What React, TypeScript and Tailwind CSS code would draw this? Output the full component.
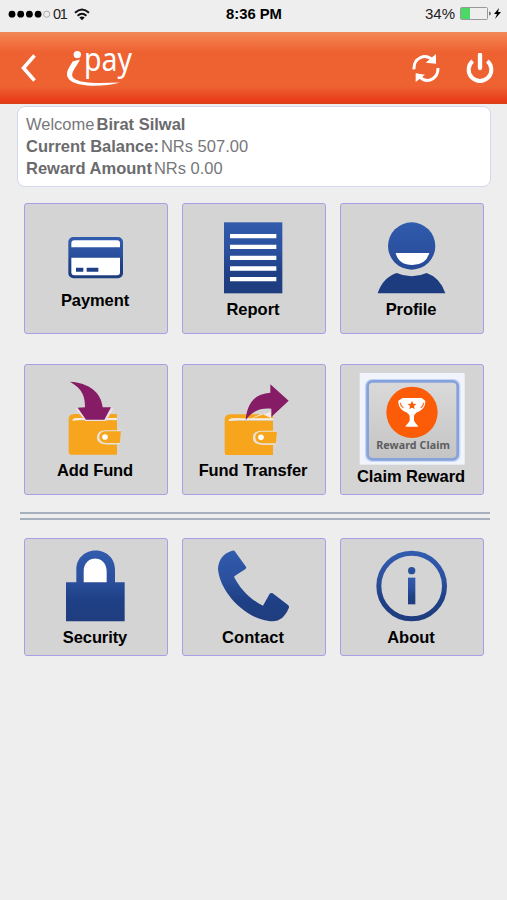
import type { ReactNode } from 'react';

const BLUE = 'url(#blue)';
const ORANGE = '#f6a51c';
const PURPLE = '#861c66';

type Tile = {
  label: string;
  labelClass: string;
  viewBox: string;
  height: number;
  icon: ReactNode;
};

const wallet = (
  <>
    <path d="M161 192q0-14 16-15h129v13h-122q-10 2-10 6h132v34h-40q-20 0-20 17t20 17q2 6 40 4v31H168q-7 0-7-7z" fill={ORANGE} />
    <path d="M172 197q1-7 13-8h121v5H200z" fill="#f6efe0" />
    <path d="M318 226h-48q-24 1-24 21t24 21h44" fill="#e9e2d6" />
    <path d="M318 229h-44q-21 0-21 17t21 18h40q2-4 2-17z" fill={ORANGE} />
    <circle cx="270" cy="246" r="8.5" fill="#fff" />
  </>
);

const mainTiles: Tile[] = [
  {
    label: 'Payment',
    labelClass: 'tracking-[-0.1px]',
    viewBox: '30 27 426 258',
    height: 86,
    icon: (
      <>
        <rect x="160" y="126" width="164" height="124" rx="15" fill={BLUE} />
        <path d="M169 157v-12q0-9 9-9h128q9 0 9 9v12z" fill="#fff" />
        <path d="M169 188h146v44q0 9-9 9H178q-9 0-9-9z" fill="#fff" />
        <path d="M183 218h22v12h-22zM215 218h35v12h-35z" fill="#1f3f86" />
      </>
    ),
  },
  {
    label: 'Report',
    labelClass: 'tracking-normal',
    viewBox: '24 27 426 285',
    height: 95,
    icon: (
      <>
        <rect x="147" y="82" width="175" height="213" fill={BLUE} />
        <path d="M165 117h139v13H165zM165 149h139v13H165zM165 182h139v13H165zM165 214h139v13H165zM165 246h139v13H165z" fill="#fff" />
      </>
    ),
  },
  {
    label: 'Profile',
    labelClass: 'tracking-[-0.1px]',
    viewBox: '18 27 426 285',
    height: 95,
    icon: (
      <>
        <circle cx="230" cy="153" r="71" fill="url(#head)" />
        <path d="M182 174h101q-10 36-51 36t-50-36z" fill="#fff" />
        <path d="M128 295q16-48 57-61 45 20 90 0 41 14 56 61z" fill="#1d3c80" />
      </>
    ),
  },
  {
    label: 'Add Fund',
    labelClass: 'tracking-[-0.1px]',
    viewBox: '30 30 426 285',
    height: 95,
    icon: (
      <>
        {wallet}
        <path d="M181 161l30 37h62l24-40z" fill="#eadfe2" />
        <path d="M165 80c56 4 93 30 98 77h25l-20 37h-55l-25-36 22-1c0-30-5-54-45-77z" fill={PURPLE} />
      </>
    ),
  },
  {
    label: 'Fund Transfer',
    labelClass: 'tracking-[-0.1px]',
    viewBox: '24 30 426 285',
    height: 95,
    icon: (
      <>
        <g transform="translate(-12 1)">{wallet}</g>
        <path d="M210 198l50-22 28 14 4-22z" fill="#f1e7e5" />
        <path d="M212 196c4-48 24-80 74-83V88l55 49-52 49v-25c-31-3-58 6-77 35z" fill={PURPLE} />
      </>
    ),
  },
  {
    label: 'Claim Reward',
    labelClass: 'tracking-[-0.1px]',
    viewBox: '18 30 426 303',
    height: 101,
    icon: (
      <>
        <rect x="74" y="54" width="315" height="275" fill="#f1f4fb" />
        <rect x="90" y="72" width="286" height="248" rx="20" fill="#c1d3f4" />
        <rect x="98" y="79" width="270" height="234" rx="15" fill="url(#silver)" stroke="#87a2da" strokeWidth="8" />
        <circle cx="231" cy="172" r="77" fill="#fc5b08" />
        <path d="M203 129h57l11 8c1 22-14 31-25 35-7 5-9 8-9 13v9c0 8 9 12 13 21h-39c4-9 13-13 13-21v-9c0-5-3-8-10-13-12-5-25-15-24-35z" fill="#fff" />
        <path d="M196 143q0 9 9 16M266 143q0 9-9 16" stroke="#fc7b38" strokeWidth="4" fill="none" />
        <path d="M231 138l4 8 9 1-7 6 2 9-8-4-8 4 2-9-7-6 9-1z" fill="#fc5b08" />
        <text x="234" y="283" textAnchor="middle" textLength="221" fontFamily="Noto Sans, sans-serif" fontSize="32" fontWeight="700" fill="#5c5c5e">
          Reward Claim
        </text>
      </>
    ),
  },
];

const infoTiles: Tile[] = [
  {
    label: 'Security',
    labelClass: 'tracking-[-0.1px]',
    viewBox: '30 27 426 264',
    height: 88,
    icon: (
      <>
        <path d="M205 160v-35c0-53 71-53 71 0v35z" fill="#fff" />
        <path d="M153 157h31v-37c0-78 116-78 116 0v37h29v117H153zM206 157h69v-33c0-51-69-51-69 0z" fill={BLUE} />
      </>
    ),
  },
  {
    label: 'Contact',
    labelClass: 'tracking-[0.1px]',
    viewBox: '24 27 426 264',
    height: 88,
    icon: (
      <path d="M169 63q8-4 12 3l33 46q-1 6-7 8-20 12-30 20c16 33 50 70 87 87l20-36q4-4 9-1l46 35q5 4 2 10c-12 29-31 43-60 38-83-12-150-98-152-158 3-29 16-43 40-52z" fill={BLUE} />
    ),
  },
  {
    label: 'About',
    labelClass: 'tracking-normal',
    viewBox: '18 27 426 264',
    height: 88,
    icon: (
      <>
        <circle cx="230" cy="168" r="98.500" fill="none" stroke={BLUE} strokeWidth="15" />
        <circle cx="230" cy="122" r="11" fill="#2a509b" />
        <rect x="219" y="143" width="22" height="80" fill={BLUE} />
      </>
    ),
  },
];

export default function App() {
  return (
    <div className="min-h-[900px] w-[507px] bg-[#eeeeee] font-['Liberation_Sans',Arial,sans-serif] text-black">
      <Gradients />
      <StatusBar />
      <Header />
      <section className="ml-[17px] mt-0.5 h-[81px] w-[474px] rounded-lg border border-[#d3d9ec] bg-white pl-2 pt-1.5 text-[16.5px] leading-[22px] text-[#77777a]">
        <Line first="Welcome" second={<b className="text-[#6b6b6e]">Birat Silwal</b>} />
        <Line first={<b className="text-[#6b6b6e]">Current Balance:</b>} second="NRs 507.00" />
        <Line first={<b className="text-[#6b6b6e]">Reward Amount</b>} second="NRs 0.00" />
      </section>

      <main>
        <div className="ml-6 mt-4 grid w-[460px] grid-cols-3 gap-x-3.5 gap-y-[30px]">
          {mainTiles.map((tile) => (
            <MenuTile key={tile.label} tile={tile} className="h-[131px]" />
          ))}
        </div>
        <div className="ml-5 mt-[17px] h-2 w-[470px] border-y-2 border-[#a6afbc]" />
        <div className="ml-6 mt-[18px] grid w-[460px] grid-cols-3 gap-x-3.5">
          {infoTiles.map((tile) => (
            <MenuTile key={tile.label} tile={tile} className="h-[118px]" />
          ))}
        </div>
      </main>
    </div>
  );
}

function Gradients() {
  return (
    <svg width="0" height="0" className="absolute">
      <defs>
        <linearGradient id="blue" x1="0" y1="0" x2="0" y2="1">
          <stop offset="0" stopColor="#315bad" />
          <stop offset="0.4" stopColor="#2b509e" />
          <stop offset="0.7" stopColor="#1f4086" />
          <stop offset="1" stopColor="#1f3d7e" />
        </linearGradient>
        <linearGradient id="head" x1="0" y1="0" x2="0" y2="1">
          <stop offset="0" stopColor="#315bad" />
          <stop offset="1" stopColor="#264a96" />
        </linearGradient>
        <linearGradient id="silver" x1="0" y1="0" x2="0" y2="1">
          <stop offset="0" stopColor="#dadada" />
          <stop offset="1" stopColor="#c4c4c4" />
        </linearGradient>
      </defs>
    </svg>
  );
}

function StatusBar() {
  return (
    <div className="flex h-8 items-start pl-2 pt-1">
      <div className="flex w-[218px] items-center">
        <svg width="43" height="18" viewBox="0 0 43 18">
          {[4, 12.7, 21.4, 30.1].map((x) => (
            <circle key={x} cx={x} cy="9.200" r="3.400" />
          ))}
          <circle cx="38.700" cy="9.200" r="3.100" fill="none" stroke="#999" strokeWidth="0.800" />
        </svg>
        <span className="ml-[2px] w-[14px] text-[14.5px] leading-5 tracking-[-1.2px] text-[#222]">01</span>
        <svg width="16" height="13" viewBox="0 0 16 13" className="ml-[7px]" fill="none" stroke="#111" strokeWidth="2">
          <path d="M1 4.800q7-6.600 14 0M3.600 7.700q4.400-4 8.800 0" />
          <path d="M5.300 9.500q2.700-2.200 5.400 0L8 12.300z" fill="#111" stroke="none" />
        </svg>
      </div>
      <b className="w-[199px] text-[14.8px] leading-5">8:36 PM</b>
      <span className="w-[35px] text-[15px] leading-5 text-[#222]">34%</span>
      <svg width="43" height="20" viewBox="0 0 43 20">
        <rect x="0.500" y="3.500" width="27" height="12" rx="1" fill="none" stroke="#999" />
        <rect x="1" y="4" width="9" height="11" fill="#4bd865" />
        <path d="M29 7.500q2 0 2 2t-2 2z" fill="#777" />
        <path d="M39 4l-5 6h3l-2 5 6-7h-3z" fill="#000" />
      </svg>
    </div>
  );
}

function Header() {
  return (
    <header className="flex h-[72px] items-center justify-between bg-[linear-gradient(#f2895b_0%,#f37d4b_8%,#ee6131_28%,#ee6131_76%,#e83b17_96%,#d64218_100%)] pr-3">
      <svg width="140" height="72" viewBox="0 32 140 72">
        <path d="M34.500 55.500L23.500 68l11 12.500" fill="none" stroke="#fff" strokeWidth="3.600" />
        <circle cx="77.300" cy="54.600" r="3.700" fill="#fff" />
        <path d="M72.500 61.500L80 59.500c-3 7-11 14-6.500 18.500 8 6.500 29 5 46.500 4.500-17 4.500-40 4.500-49 -1.500-9-7 0-15 1.500-19.500z" fill="#fff" />
        <text x="84" y="70.500" textLength="48" lengthAdjust="spacingAndGlyphs" fontFamily="Noto Sans, sans-serif" fontSize="32" fill="#fff">
          pay
        </text>
      </svg>
      <div className="flex gap-[24px]">
        <svg width="30" height="30" viewBox="0 0 90 90" fill="none" stroke="#fff" strokeWidth="9">
          <path d="M9 49c-2-34 34-49 54-29M81 45c1 33-34 49-54 27" />
          <path d="M75 3v29l-31-3zM14 87V61l28 4z" fill="#fff" stroke="none" />
        </svg>
        <svg width="30" height="30" viewBox="0 0 90 90" fill="none" stroke="#fff" strokeWidth="12">
          <path d="M23 24a34 34 0 1 0 44 0" />
          <path d="M45 5v40" strokeWidth="13" strokeLinecap="round" />
        </svg>
      </div>
    </header>
  );
}

function Line({ first, second }: { first: ReactNode; second: ReactNode }) {
  return (
    <div className="flex gap-0.5">
      <span>{first}</span>
      <span>{second}</span>
    </div>
  );
}

function MenuTile({ tile, className }: { tile: Tile; className: string }) {
  return (
    <button className={`flex flex-col items-center rounded-[3px] border border-[#a69fe6] bg-[#d4d4d4] ${className}`}>
      <svg width="142" height={tile.height} viewBox={tile.viewBox} className="shrink-0">
        {tile.icon}
      </svg>
      <span className={`whitespace-nowrap pr-0.5 text-[16.5px] font-bold leading-5 ${tile.labelClass}`}>{tile.label}</span>
    </button>
  );
}
